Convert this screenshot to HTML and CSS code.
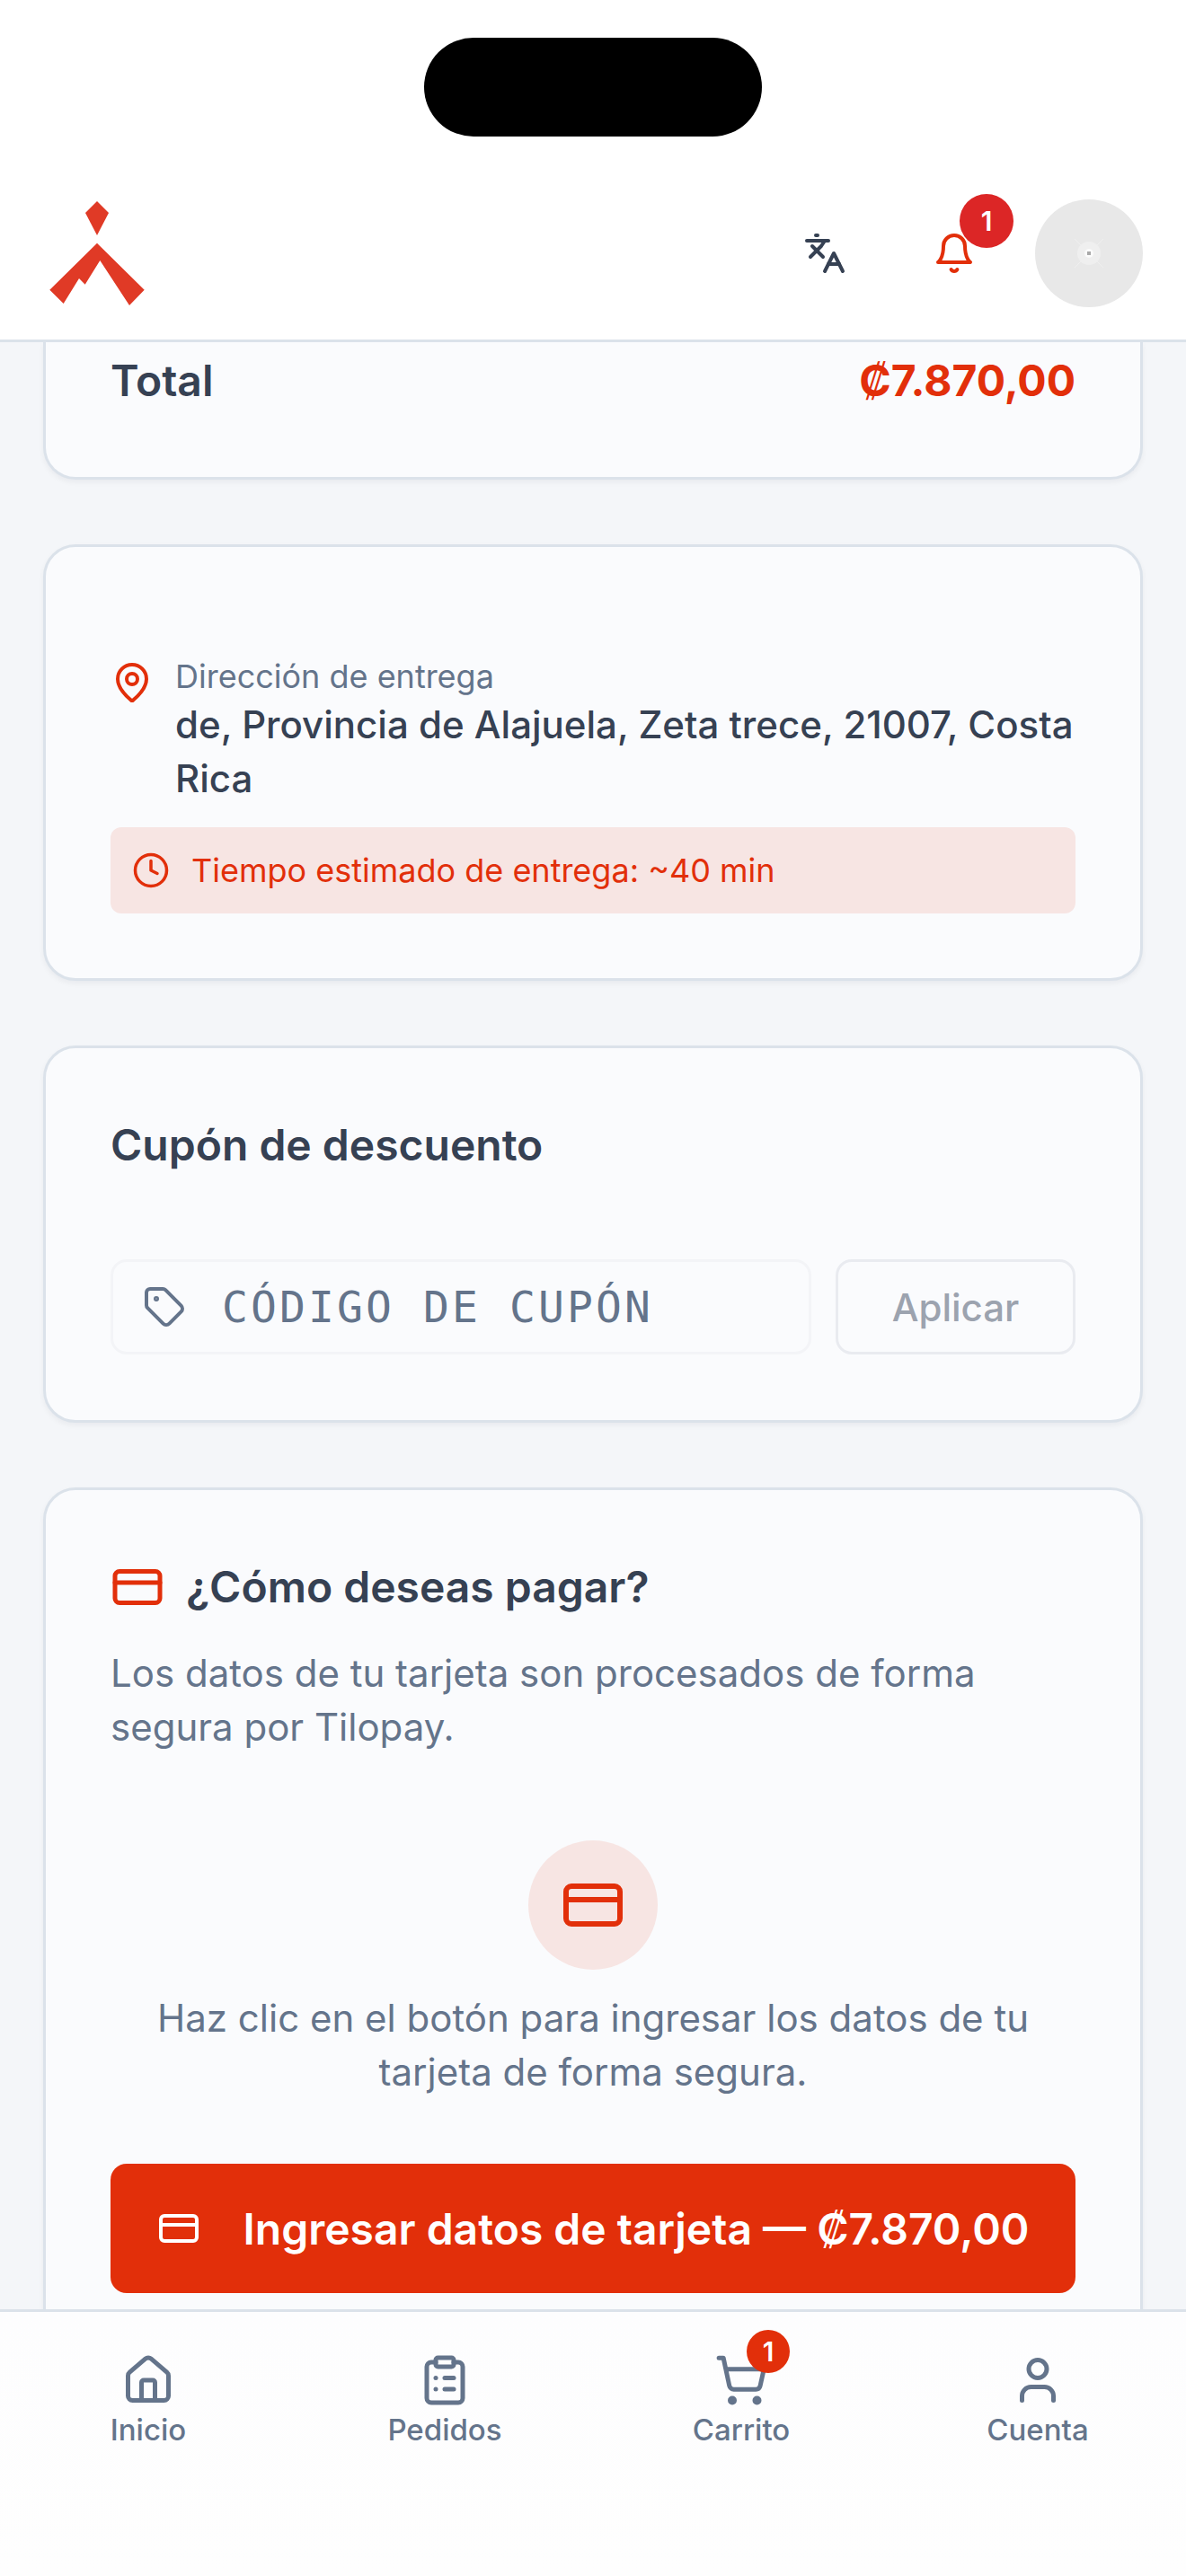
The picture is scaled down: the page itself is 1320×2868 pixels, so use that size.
FILE: index.html
```html
<!doctype html>
<html lang="es">
<head>
    <meta charset="utf-8"/>
    <meta content="width=device-width, initial-scale=1" name="viewport"/>
    <title>Checkout</title>
    <link rel="stylesheet" href="styles.css">
</head>
<body>
    <div class="island"></div>
    <div class="app">
        <header class="topbar">
            <svg class="logo" viewBox="0 0 120 120">
                <path d="M60 2 73 15 60 40 47 15z"/>
                <path d="M60 48.7 112.7 100.7 96 118 63.3 68 46.7 94.7 40 88 22.7 116 7.3 100.7z"/>
            </svg>
            <div class="actions">
                <button class="icon-btn">
                    <svg class="icon" viewBox="0 0 24 24"><path d="m5 8 6 6"/><path d="m4 14 6-6 2-3"/><path d="M2 5h12"/><path d="M7 2h1"/><path d="m22 22-5-10-5 10"/><path d="M14 18h6"/></svg>
                </button>
                <button class="icon-btn alert-btn">
                    <svg class="icon" viewBox="0 0 24 24"><path d="M6 8a6 6 0 0 1 12 0c0 7 3 9 3 9H3s3-2 3-9"/><path d="M10.3 21a1.94 1.94 0 0 0 3.4 0"/></svg>
                    <span class="badge">1</span>
                </button>
                <div class="avatar">
                    <svg viewBox="0 0 120 120">
                        <path class="avatar-cross" d="M44 44 76 76M76 44 44 76"/>
                        <circle cx="60" cy="60" r="13" fill="#efefef"/>
                        <circle cx="60" cy="60" r="5" fill="#fbfbfb"/>
                        <rect x="58" y="58" width="4" height="4" fill="#a9a9a9"/>
                    </svg>
                </div>
            </div>
        </header>

        <main class="content">
            <section class="card card-clipped">
                <div class="total-row">
                    <span>Total</span>
                    <span class="price">₡7.870,00</span>
                </div>
            </section>

            <section class="card">
                <div class="address">
                    <svg class="icon pin" viewBox="0 0 24 24"><path d="M20 10c0 4.993-5.539 10.193-7.399 11.799a1 1 0 0 1-1.202 0C9.539 20.193 4 14.993 4 10a8 8 0 0 1 16 0"/><circle cx="12" cy="10" r="3"/></svg>
                    <div>
                        <div class="address-label">Dirección de entrega</div>
                        <div class="address-text">de, Provincia de Alajuela, Zeta trece, 21007, Costa Rica</div>
                    </div>
                </div>
                <div class="eta">
                    <svg class="icon clock" viewBox="0 0 24 24"><circle cx="12" cy="12" r="10"/><path d="M12 6v6l4 2"/></svg>
                    <span>Tiempo estimado de entrega: ~40 min</span>
                </div>
            </section>

            <section class="card card-coupon">
                <h2 class="title coupon-title">Cupón de descuento</h2>
                <div class="coupon">
                    <div class="coupon-input">
                        <svg class="icon tag" viewBox="0 0 24 24"><path d="M12.586 2.586A2 2 0 0 0 11.172 2H4a2 2 0 0 0-2 2v7.172a2 2 0 0 0 .586 1.414l8.704 8.704a2.426 2.426 0 0 0 3.42 0l6.58-6.58a2.426 2.426 0 0 0 0-3.42z"/><circle cx="7.5" cy="7.5" r=".5" fill="currentColor"/></svg>
                        <span>CÓDIGO DE CUPÓN</span>
                    </div>
                    <button class="coupon-btn">Aplicar</button>
                </div>
            </section>

            <section class="card">
                <div class="pay-head">
                    <svg class="icon card-icon" viewBox="0 0 24 24"><rect width="20" height="14" x="2" y="5" rx="2"/><path d="M2 10h20"/></svg>
                    <h2 class="title">¿Cómo deseas pagar?</h2>
                </div>
                <p class="pay-note">Los datos de tu tarjeta son procesados de forma segura por Tilopay.</p>
                <div class="pay-circle">
                    <svg class="icon card-icon-big" viewBox="0 0 24 24"><rect width="20" height="14" x="2" y="5" rx="2"/><path d="M2 10h20"/></svg>
                </div>
                <p class="pay-hint">Haz clic en el botón para ingresar los datos de tu tarjeta de forma segura.</p>
                <button class="pay-btn">
                    <svg class="icon" viewBox="0 0 24 24"><rect width="20" height="14" x="2" y="5" rx="2"/><path d="M2 10h20"/></svg>
                    <span>Ingresar datos de tarjeta — ₡7.870,00</span>
                </button>
            </section>
        </main>

        <nav class="tabbar">
            <a class="tab">
                <svg class="icon" viewBox="0 0 24 24"><path d="M15 21v-8a1 1 0 0 0-1-1h-4a1 1 0 0 0-1 1v8"/><path d="M3 10a2 2 0 0 1 .709-1.528l7-5.999a2 2 0 0 1 2.582 0l7 5.999A2 2 0 0 1 21 10v9a2 2 0 0 1-2 2H5a2 2 0 0 1-2-2z"/></svg>
                <span>Inicio</span>
            </a>
            <a class="tab">
                <svg class="icon" viewBox="0 0 24 24"><rect width="8" height="4" x="8" y="2" rx="1"/><path d="M16 4h2a2 2 0 0 1 2 2v14a2 2 0 0 1-2 2H6a2 2 0 0 1-2-2V6a2 2 0 0 1 2-2h2"/><path d="M12 11h4"/><path d="M12 16h4"/><path d="M8 11h.01"/><path d="M8 16h.01"/></svg>
                <span>Pedidos</span>
            </a>
            <a class="tab">
                <div class="cart">
                    <svg class="icon" viewBox="0 0 24 24"><circle cx="8" cy="21" r="1"/><circle cx="19" cy="21" r="1"/><path d="M2.05 2.05h2l2.66 12.42a2 2 0 0 0 2 1.58h9.78a2 2 0 0 0 1.95-1.57l1.65-7.43H5.12"/></svg>
                    <span class="cart-badge">1</span>
                </div>
                <span>Carrito</span>
            </a>
            <a class="tab">
                <svg class="icon" viewBox="0 0 24 24"><path d="M19 21v-2a4 4 0 0 0-4-4H9a4 4 0 0 0-4 4v2"/><circle cx="12" cy="7" r="4"/></svg>
                <span>Cuenta</span>
            </a>
        </nav>
    </div>
</body>
</html>
```

FILE: styles.css
```css
* {
    box-sizing: border-box;
}

body {
    margin: 0;
    font-family: Inter, "Liberation Sans", sans-serif;
    color: #364153;
    background: #f4f6f9;
}

button {
    font-family: inherit;
    padding: 0;
    background: none;
    border: none;
}

.app {
    height: 2868px;
    display: flex;
    flex-direction: column;
    overflow: hidden;
}

.island {
    position: absolute;
    top: 42px;
    left: 472px;
    width: 376px;
    height: 110px;
    border-radius: 55px;
    background: #000;
}

.icon {
    width: 48px;
    height: 48px;
    flex: none;
    fill: none;
    stroke: currentColor;
    stroke-width: 2;
    stroke-linecap: round;
    stroke-linejoin: round;
}

/* top bar */
.topbar {
    height: 381px;
    flex: none;
    display: flex;
    align-items: center;
    justify-content: space-between;
    padding: 186px 48px 0;
    background: #fff;
    border-bottom: 3px solid #dbe2ea;
}

.logo {
    width: 120px;
    height: 120px;
    fill: #e03a26;
}

.actions {
    display: flex;
    align-items: center;
    gap: 48px;
}

.icon-btn {
    position: relative;
    width: 96px;
    height: 96px;
    display: flex;
    align-items: center;
    justify-content: center;
    color: #364153;
}

.alert-btn {
    color: #e22f0a;
}

.badge {
    position: absolute;
    top: -18px;
    right: -18px;
    width: 60px;
    height: 60px;
    border-radius: 50%;
    background: #dc2626;
    color: #fff;
    font-size: 30px;
    font-weight: 600;
    line-height: 60px;
    text-align: center;
}

.avatar {
    width: 120px;
    height: 120px;
    margin-left: -6px;
    border-radius: 50%;
    background: #e8e8e8;
}

.avatar svg {
    display: block;
}

.avatar-cross {
    stroke: #efefef;
    stroke-width: 1;
}

/* cards */
.content {
    flex: 1;
    min-height: 0;
    overflow: hidden;
    padding: 0 48px;
    display: flex;
    flex-direction: column;
    gap: 72px;
}

.card {
    flex: none;
    padding: 72px;
    background: #fafbfd;
    border: 3px solid #dbe2ea;
    border-radius: 36px;
    box-shadow: 0 3px 6px rgba(15, 23, 42, 0.05);
}

.card-clipped {
    padding-top: 7px;
    padding-bottom: 71px;
    border-top: none;
    border-radius: 0 0 36px 36px;
}

.card-coupon {
    padding-bottom: 73px;
}

.total-row {
    display: flex;
    justify-content: space-between;
    font-size: 48px;
    font-weight: 600;
    line-height: 72px;
}

.price {
    color: #e22f0a;
    font-weight: 700;
}

.title {
    margin: 0;
    font-size: 48px;
    font-weight: 600;
    line-height: 72px;
}

/* address */
.address {
    display: flex;
    gap: 24px;
    margin-top: 48px;
}

.pin {
    margin-top: 7px;
    color: #e22f0a;
}

.address-label {
    font-size: 36px;
    line-height: 48px;
    color: #64748b;
}

.address-text {
    font-size: 42px;
    font-weight: 500;
    line-height: 60px;
}

.eta {
    display: flex;
    align-items: center;
    gap: 24px;
    height: 96px;
    margin-top: 24px;
    padding: 0 24px;
    border-radius: 12px;
    background: #f7e5e3;
    color: #e22f0a;
    font-size: 36px;
}

.clock {
    width: 42px;
    height: 42px;
}

/* coupon */
.coupon-title {
    margin-bottom: 91px;
}

.coupon {
    display: flex;
    gap: 27px;
}

.coupon-input {
    flex: 1;
    height: 106px;
    display: flex;
    align-items: center;
    gap: 40px;
    padding: 0 33px;
    border: 3px solid #f3f4f7;
    border-radius: 18px;
    color: #64748b;
    font-family: "DejaVu Sans Mono", monospace;
    font-size: 48px;
    letter-spacing: 3.1px;
}

.coupon-btn {
    width: 267px;
    height: 106px;
    border: 3px solid #e9ebf0;
    border-radius: 18px;
    color: #9ca3af;
    font-size: 42px;
    font-weight: 500;
}

/* payment */
.pay-head {
    display: flex;
    align-items: center;
    gap: 24px;
}

.card-icon {
    width: 60px;
    height: 60px;
    color: #e22f0a;
}

.pay-note {
    margin: 30px 0 0;
    font-size: 42px;
    line-height: 60px;
    color: #64748b;
}

.pay-circle {
    width: 144px;
    height: 144px;
    margin: 96px auto 0;
    display: flex;
    align-items: center;
    justify-content: center;
    border-radius: 50%;
    background: #f7e5e3;
}

.card-icon-big {
    width: 72px;
    height: 72px;
    color: #e22f0a;
}

.pay-hint {
    margin: 24px 0 0;
    font-size: 42px;
    line-height: 60px;
    color: #64748b;
    text-align: center;
}

.pay-btn {
    width: 100%;
    height: 144px;
    margin-top: 72px;
    display: flex;
    align-items: center;
    justify-content: center;
    gap: 48px;
    border-radius: 18px;
    background: #e22f0a;
    color: #fff;
    font-size: 48px;
    font-weight: 600;
}

/* bottom nav */
.tabbar {
    height: 297px;
    flex: none;
    display: grid;
    grid-template-columns: repeat(4, 1fr);
    padding-top: 46px;
    background: linear-gradient(#fdfdfe, #fefefe);
    border-top: 3px solid #dbe2ea;
    position: relative;
}

.tab {
    display: flex;
    flex-direction: column;
    align-items: center;
    gap: 3px;
    color: #64748b;
    font-size: 33px;
    font-weight: 500;
    line-height: 44px;
}

.tab .icon {
    width: 60px;
    height: 60px;
    display: block;
}

.cart {
    position: relative;
}

.cart-badge {
    position: absolute;
    top: -26px;
    right: -24px;
    width: 48px;
    height: 48px;
    border-radius: 50%;
    background: #e22f0a;
    color: #fff;
    font-size: 30px;
    font-weight: 600;
    line-height: 48px;
    text-align: center;
}
```
